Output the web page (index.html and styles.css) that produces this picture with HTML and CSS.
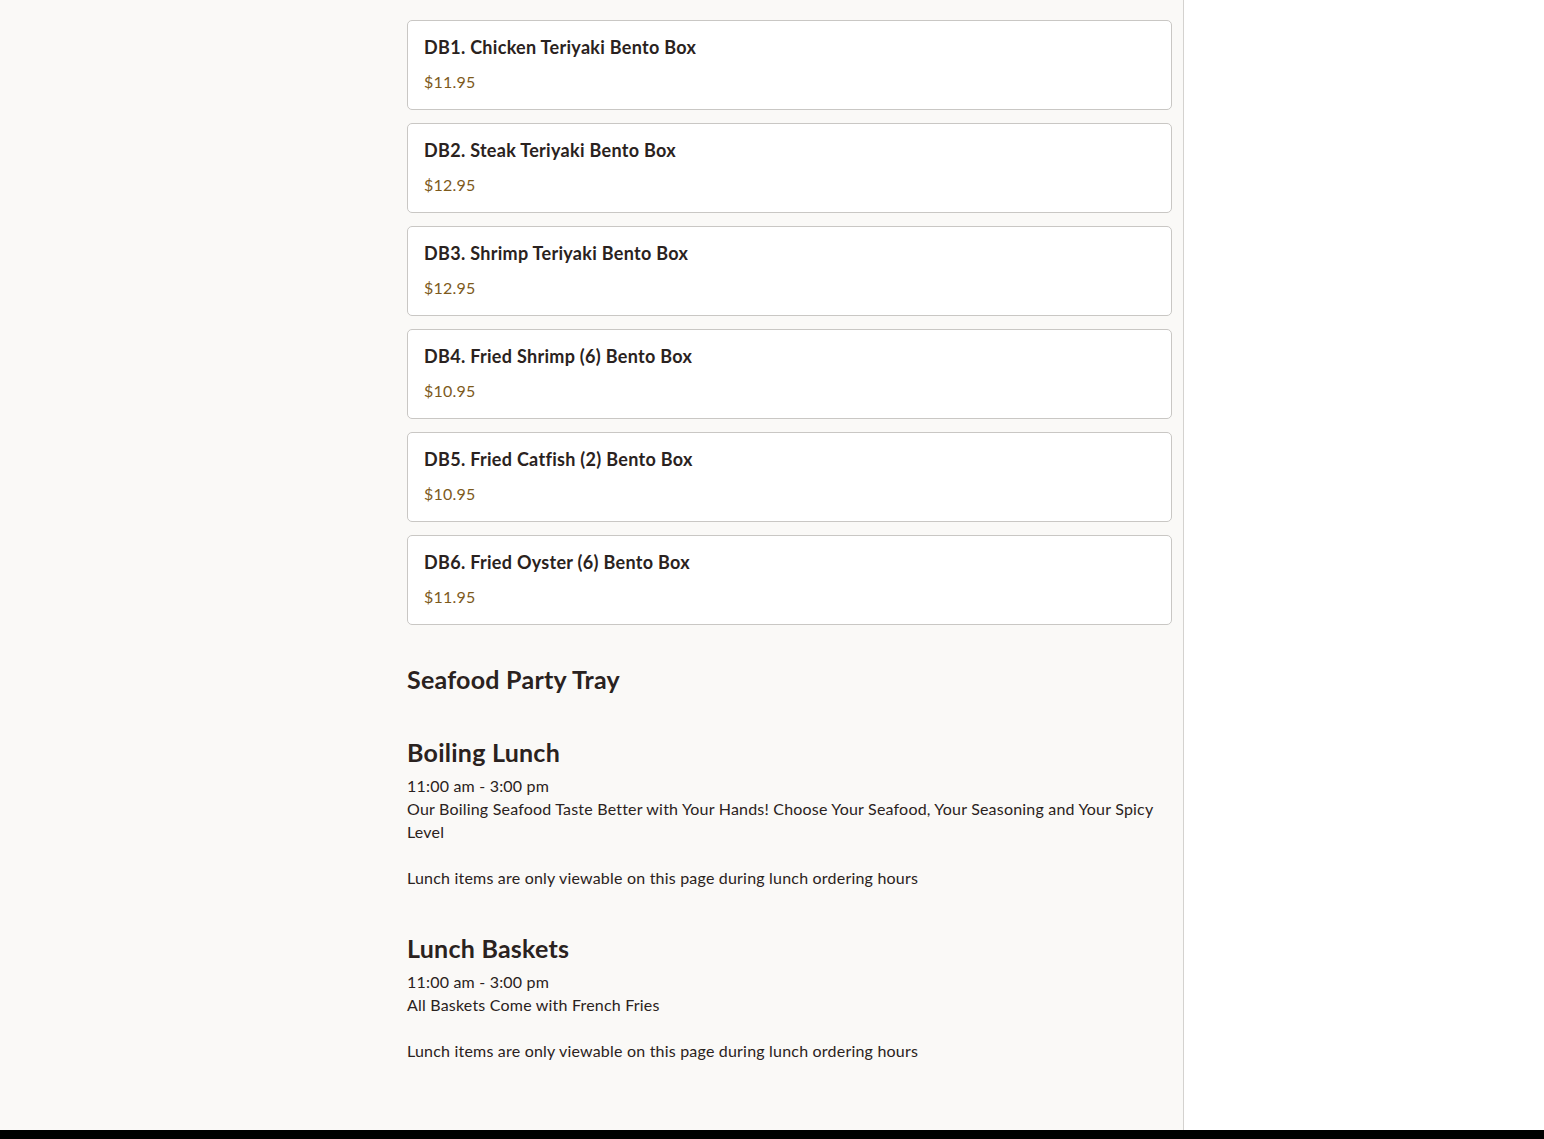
FILE: index.html
```html
<!DOCTYPE html>
<html lang="en">
<head>
<meta charset="utf-8">
<title>Menu</title>
<link rel="stylesheet" href="styles.css">
</head>
<body>
<div class="page">
  <main class="menu">
    <div class="items">
      <div class="card"><div class="name">DB1. Chicken Teriyaki Bento Box</div><div class="price">$11.95</div></div>
      <div class="card"><div class="name">DB2. Steak Teriyaki Bento Box</div><div class="price">$12.95</div></div>
      <div class="card"><div class="name">DB3. Shrimp Teriyaki Bento Box</div><div class="price">$12.95</div></div>
      <div class="card"><div class="name">DB4. Fried Shrimp (6) Bento Box</div><div class="price">$10.95</div></div>
      <div class="card"><div class="name">DB5. Fried Catfish (2) Bento Box</div><div class="price">$10.95</div></div>
      <div class="card"><div class="name">DB6. Fried Oyster (6) Bento Box</div><div class="price">$11.95</div></div>
    </div>
    <section class="section">
      <h2 class="title">Seafood Party Tray</h2>
    </section>
    <section class="section">
      <h2 class="title">Boiling Lunch</h2>
      <div class="info">
        <div>11:00 am - 3:00 pm</div>
        <div>Our Boiling Seafood Taste Better with Your Hands! Choose Your Seafood, Your Seasoning and Your Spicy Level</div>
        <div class="blank"></div>
        <div>Lunch items are only viewable on this page during lunch ordering hours</div>
      </div>
    </section>
    <section class="section section-last">
      <h2 class="title">Lunch Baskets</h2>
      <div class="info">
        <div>11:00 am - 3:00 pm</div>
        <div>All Baskets Come with French Fries</div>
        <div class="blank"></div>
        <div>Lunch items are only viewable on this page during lunch ordering hours</div>
      </div>
    </section>
  </main>
  <aside class="side"></aside>
</div>
<footer class="footer"></footer>
</body>
</html>
```

FILE: styles.css
```css
* { box-sizing: border-box; }
html, body { margin: 0; padding: 0; }
body {
  font-family: Lato, "Noto Sans", sans-serif;
  color: #2a2220;
  background: #ffffff;
}
.page {
  display: flex;
  min-height: 1130px;
}
.menu {
  width: 1184px;
  flex: none;
  background: #faf9f7;
  border-right: 1px solid #d4d2cf;
  padding: 20px 11px 0 407px;
}
.side { flex: 1; background: #fff; }
.items {
  display: flex;
  flex-direction: column;
  gap: 13px;
}
.card {
  background: #fff;
  border: 1px solid #c9c7c4;
  border-radius: 5px;
  padding: 15px 16px 16px;
  display: flex;
  flex-direction: column;
  gap: 11px;
}
.name {
  font-size: 18px;
  line-height: 23px;
  font-weight: 700;
  letter-spacing: 0.3px;
  color: #2a2220;
}
.price {
  font-size: 16px;
  line-height: 23px;
  letter-spacing: 0.2px;
  color: #7d5a1c;
}
.section { margin-top: 38px; }
.section + .section { margin-top: 41px; }
.section-last.section { margin-top: 43px; }
.title {
  margin: 0;
  font-size: 25px;
  line-height: 32px;
  font-weight: 700;
  letter-spacing: 0.25px;
  color: #2a2220;
}
.info {
  margin-top: 6px;
  font-size: 16px;
  line-height: 23px;
  letter-spacing: 0.2px;
}
.blank { height: 23px; }
.footer {
  height: 9px;
  background: #000;
}
```
